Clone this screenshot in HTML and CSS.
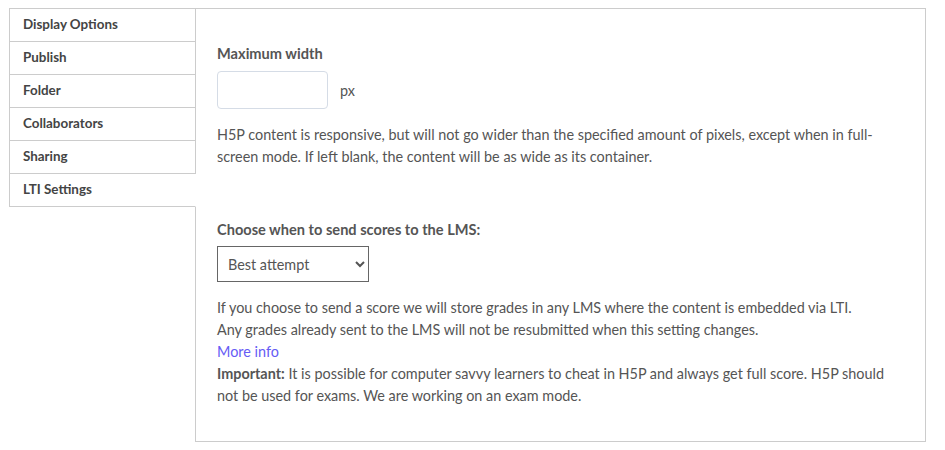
FILE: index.html
```html
<!DOCTYPE html>
<html lang="en">
<head>
    <meta charset="UTF-8">
    <title>LTI Settings</title>
    <link rel="stylesheet" href="styles.css">
</head>
<body>
    <div class="settings">
        <ul class="tabs">
            <li>Display Options</li>
            <li>Publish</li>
            <li>Folder</li>
            <li>Collaborators</li>
            <li>Sharing</li>
            <li class="active">LTI Settings</li>
        </ul>
        <section class="panel">
            <div class="field">
                <label for="max-width">Maximum width</label>
                <div class="width-row">
                    <input type="text" id="max-width">
                    <span class="unit">px</span>
                </div>
                <p class="desc">H5P content is responsive, but will not go wider than the specified amount of pixels, except when in full-screen mode. If left blank, the content will be as wide as its container.</p>
            </div>
            <div class="field">
                <label for="send-scores">Choose when to send scores to the LMS:</label>
                <select id="send-scores">
                    <option>Best attempt</option>
                    <option>Last attempt</option>
                    <option>Never</option>
                </select>
                <div class="desc">
                    <p>If you choose to send a score we will store grades in any LMS where the content is embedded via LTI.</p>
                    <p>Any grades already sent to the LMS will not be resubmitted when this setting changes.</p>
                    <p><a href="#">More info</a></p>
                    <p><strong>Important:</strong> <span>It is possible for computer savvy learners to cheat in H5P and always get full score. H5P should</span><br><span>not be used for exams. We are working on an exam mode.</span></p>
                </div>
            </div>
        </section>
    </div>
</body>
</html>
```

FILE: styles.css
```css
body {
    margin: 0;
    padding: 8px 19px 0 9px;
    font-family: Lato, "Open Sans", sans-serif;
    font-size: 14.4px;
    color: #555;
    background: #fff;
}

.settings {
    display: flex;
    height: 434px;
}

.tabs {
    list-style: none;
    margin: 0 -1px 0 0;
    padding: 0;
    width: 186px;
    align-self: flex-start;
    border-top: 1px solid #ccc;
    border-left: 1px solid #ccc;
    position: relative;
    z-index: 1;
}

.tabs li {
    height: 32px;
    line-height: 31px;
    padding-left: 13px;
    font-size: 13.4px;
    font-weight: bold;
    color: #444;
    border-bottom: 1px solid #ccc;
    border-right: 1px solid #ccc;
    background: #fff;
}

.tabs li.active {
    border-right-color: #fff;
}

.panel {
    flex: 1;
    border: 1px solid #ccc;
    padding: 34px 21px 0 21px;
}

.field label {
    display: block;
    font-weight: bold;
    font-size: 14.6px;
    line-height: 22px;
}

.width-row {
    display: flex;
    align-items: center;
    gap: 12px;
    margin-top: 6px;
}

.width-row input {
    width: 111px;
    height: 38px;
    box-sizing: border-box;
    border: 1px solid #d5dce6;
    border-radius: 4px;
    padding: 0 8px;
    font: inherit;
}

.desc {
    margin: 15px 0 0;
    line-height: 22px;
}

.desc p {
    margin: 0;
}

.field + .field {
    margin-top: 51px;
}

.field select {
    display: block;
    margin-top: 5px;
    width: 152px;
    height: 36px;
    border: 1px solid #666;
    border-radius: 0;
    background: #fff;
    color: #555;
    font: inherit;
    padding: 0 6px;
}

.field select + .desc {
    margin-top: 15px;
}

.desc a {
    color: #665cf5;
    text-decoration: none;
}

.desc strong {
    color: #555;
}
```
